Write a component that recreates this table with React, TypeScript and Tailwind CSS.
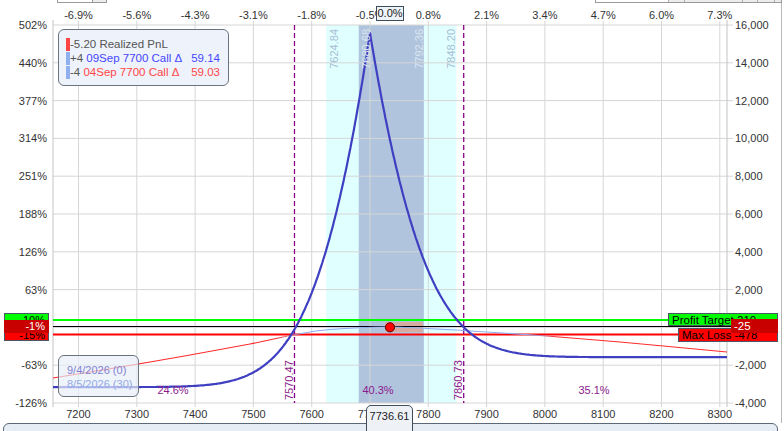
import React from 'react'

// price -> x on the plot
const px = (p: number) => 78.5 + (p - 7200) * 0.583
// dollars -> y on the plot
const vy = (v: number) => 327.4 - v * 0.0189

const TOP_PCT = ['-6.9%', '-5.6%', '-4.3%', '-3.1%', '-1.8%', '-0.5%', '0.8%', '2.1%', '3.4%', '4.7%', '6.0%', '7.3%']
const LEFT_TICKS = ['502%', '440%', '377%', '314%', '251%', '188%', '126%', '63%', '', '-63%', '-126%']
const RIGHT_TICKS = ['16,000', '14,000', '12,000', '10,000', '8,000', '6,000', '4,000', '2,000', '', '-2,000', '-4,000']
const PRICES = [7200, 7300, 7400, 7500, 7600, 7700, 7800, 7900, 8000, 8100, 8200, 8300]

function erfc(x: number) {
  const t = 1 / (1 + 0.5 * Math.abs(x))
  const r =
    t *
    Math.exp(
      -x * x - 1.26551223 +
        t * (1.00002368 + t * (0.37409196 + t * (0.09678418 + t * (-0.18628806 + t * (0.27886807 + t * (-1.13520398 + t * (1.48851587 + t * (-0.82215223 + t * 0.17087277))))))))
    )
  return x >= 0 ? r : 2 - r
}
const phi = (z: number) => Math.exp((-z * z) / 2) / Math.sqrt(2 * Math.PI)
const timeValue = (z: number) => (phi(z) - z * 0.5 * erfc(z / Math.SQRT2)) / phi(0)

function expiryPath() {
  const ps: number[] = []
  for (let p = 7156.3; p <= 8312.3; p += 2) ps.push(p)
  ps.push(7700)
  ps.sort((a, b) => a - b)
  return ps
    .map((p, i) => {
      const base = p < 7700 ? -3160 : -1575
      const v = base + (15577 - base) * timeValue(Math.abs(p - 7700) / 115)
      return `${i ? 'L' : 'M'}${px(p).toFixed(1)} ${vy(v).toFixed(1)}`
    })
    .join(' ')
}

function smoothPath(pts: number[][]) {
  let d = `M${pts[0][0]} ${pts[0][1]}`
  for (let i = 0; i < pts.length - 1; i++) {
    const p0 = pts[Math.max(0, i - 1)]
    const p1 = pts[i]
    const p2 = pts[i + 1]
    const p3 = pts[Math.min(pts.length - 1, i + 2)]
    const c1 = [p1[0] + (p2[0] - p0[0]) / 6, p1[1] + (p2[1] - p0[1]) / 6]
    const c2 = [p2[0] - (p3[0] - p1[0]) / 6, p2[1] - (p3[1] - p1[1]) / 6]
    d += ` C${c1[0].toFixed(1)} ${c1[1].toFixed(1)} ${c2[0].toFixed(1)} ${c2[1].toFixed(1)} ${p2[0]} ${p2[1]}`
  }
  return d
}

const T0 = [
  [53, 378], [150, 362], [250, 344], [293, 335], [330, 329.5], [390, 327],
  [463, 330.5], [540, 335.5], [620, 342], [727, 352],
]

function Chart() {
  const rows = LEFT_TICKS.map((_, i) => 25 + i * 37.8)
  return (
    <svg width={784} height={423} className="block" fontSize={11}>
      <defs>
        <linearGradient id="t0" gradientUnits="userSpaceOnUse" x1={53} y1={0} x2={727} y2={0}>
          <stop offset="0.33" stopColor="#ff2a2a" />
          <stop offset="0.37" stopColor="#8eacf2" />
          <stop offset="0.71" stopColor="#8eacf2" />
          <stop offset="0.75" stopColor="#ff2a2a" />
        </linearGradient>
      </defs>

      {/* ranges */}
      <rect x={px(7624.84)} y={25} width={px(7848.2) - px(7624.84)} height={378} fill="#e0ffff" />
      <rect x={px(7680.68)} y={25} width={px(7792.36) - px(7680.68)} height={378} fill="#b0c4de" />

      {/* grid */}
      {rows.map((y) => (
        <line key={y} x1={53} x2={733} y1={y} y2={y} stroke="#d6d6d6" />
      ))}
      {PRICES.map((p) => (
        <line key={p} x1={px(p)} x2={px(p)} y1={21} y2={407} stroke="#d6d6d6" />
      ))}
      <line x1={53} x2={53} y1={20} y2={407} stroke="#c4c4c4" />
      <line x1={727} x2={727} y1={20} y2={407} stroke="#c4c4c4" />
      <line x1={781.5} x2={781.5} y1={0} y2={423} stroke="#b8b8b8" />

      <rect x={385} y={322} width={38} height={10} fill="#d6aca2" />

      {/* target lines */}
      <line x1={53} x2={668} y1={320} y2={320} stroke="#00ff00" strokeWidth={2} />
      <line x1={53} x2={731} y1={326.5} y2={326.5} stroke="#000" strokeWidth={1} />
      <line x1={53} x2={678} y1={334.5} y2={334.5} stroke="#ff0000" strokeWidth={2} />

      {/* breakevens */}
      <line x1={px(7570.47)} x2={px(7570.47)} y1={25} y2={403} stroke="#8b008b" strokeWidth={1.3} strokeDasharray="5 3" />
      <line x1={px(7860.73)} x2={px(7860.73)} y1={25} y2={403} stroke="#8b008b" strokeWidth={1.3} strokeDasharray="5 3" />

      <path d={smoothPath(T0)} fill="none" stroke="url(#t0)" strokeWidth={1.1} />
      <path d={expiryPath()} fill="none" stroke="#3f3fc2" strokeWidth={2.2} strokeLinejoin="round" />

      <circle cx={390} cy={327.3} r={4.6} fill="#ff0000" stroke="#5a0000" strokeWidth={1} />

      {/* range labels */}
      <text transform="translate(338,29) rotate(-90)" textAnchor="end" fill="#a9bdd6">7624.84</text>
      <text transform="translate(370,29) rotate(-90)" textAnchor="end" fill="#dbe4ef">7680.68</text>
      <text transform="translate(423,29) rotate(-90)" textAnchor="end" fill="#dbe4ef">7792.36</text>
      <text transform="translate(455,29) rotate(-90)" textAnchor="end" fill="#a9bdd6">7848.20</text>

      <text transform="translate(293,400) rotate(-90)" fill="#8b1a8b">7570.47</text>
      <text transform="translate(462,400) rotate(-90)" fill="#8b1a8b">7860.73</text>
      <text x={173} y={390} textAnchor="middle" dominantBaseline="central" fill="#8b1a8b">24.6%</text>
      <text x={378} y={390} textAnchor="middle" dominantBaseline="central" fill="#8b1a8b">40.3%</text>
      <text x={594} y={390} textAnchor="middle" dominantBaseline="central" fill="#8b1a8b">35.1%</text>

      {/* axes text */}
      {TOP_PCT.map((t, i) => (
        <text key={t} x={px(PRICES[i])} y={14.5} textAnchor="middle" dominantBaseline="central" fill="#333">
          {t}
        </text>
      ))}
      {PRICES.map((p) => (
        <text key={p} x={px(p)} y={414} textAnchor="middle" dominantBaseline="central" fill="#333">
          {p}
        </text>
      ))}
      {LEFT_TICKS.map((t, i) =>
        t ? (
          <text key={t} x={47} y={rows[i]} textAnchor="end" dominantBaseline="central" fill="#333">
            {t}
          </text>
        ) : null
      )}
      {RIGHT_TICKS.map((t, i) =>
        t ? (
          <text key={t} x={735} y={rows[i]} dominantBaseline="central" fill="#333">
            {t}
          </text>
        ) : null
      )}
    </svg>
  )
}

export default function App() {
  return (
    <div className="relative h-[431px] w-[784px] overflow-hidden bg-white font-['Liberation_Sans',Arial,sans-serif] text-[11px]">
      <Chart />
      <div className="ml-[3px] h-[30px] w-[775px] rounded-t-[6px] border border-[#5b6878] bg-[#e7edf5]" />

      {/* toolbar edges peeking in at the top */}
      <div className="absolute left-[57px] top-[-20px] flex h-[23px] w-[50px] border border-[#9a9a9a] bg-white">
        <div className="flex-1" />
        <div className="w-[14px] border-l border-[#9a9a9a] bg-[#ececec]" />
      </div>
      <div className="absolute left-[595px] top-[-20px] flex h-[23px] w-[187px] border border-[#9a9a9a] bg-white">
        <div className="w-[72px]" />
        <div className="w-[16px] border-l border-[#b0b0b0] bg-[#ececec]" />
        <div className="w-[58px] border-l border-[#b0b0b0] bg-[#ececec]" />
        <div className="w-[15px] border-l border-[#b0b0b0] bg-[#ececec]" />
        <div className="w-[17px] border-l border-[#b0b0b0] bg-[#ececec]" />
        <div className="flex-1 border-l border-[#b0b0b0] bg-[#ececec]" />
      </div>

      {/* position legend */}
      <div className="absolute left-[58px] top-[29px] h-[57px] w-[171px] rounded-[6px] border border-[#6b7380] bg-[#eef2fa] pl-[7px] pr-[8px] pt-[7px] text-[11.5px] leading-[14px]">
        <div className="flex items-center">
          <span className="h-[13px] w-[4px] bg-[#ff4444]" />
          <span className="text-[#555]">-5.20 Realized PnL</span>
        </div>
        <div className="flex items-center">
          <span className="h-[13px] w-[4px] bg-[#8eb0ee]" />
          <span className="flex-1 text-[#555]">
            +4 <span className="text-[#4646ff]">09Sep 7700 Call Δ</span>
          </span>
          <span className="text-[#4646ff]">59.14</span>
        </div>
        <div className="flex items-center">
          <span className="h-[13px] w-[4px] bg-[#8eb0ee]" />
          <span className="flex-1 text-[#555]">
            -4 <span className="text-[#ff4646]">04Sep 7700 Call Δ</span>
          </span>
          <span className="text-[#ff4646]">59.03</span>
        </div>
      </div>

      {/* date legend */}
      <div className="absolute left-[58px] top-[355px] h-[42px] w-[81px] rounded-[6px] border border-[#6b7380] bg-[#e8eef8]/70 pl-[8px] pt-[7px] leading-[14px]">
        <div className="text-[#8282d2]">9/4/2026 (0)</div>
        <div className="text-[#92abe8]">8/5/2026 (30)</div>
      </div>

      {/* left value tags */}
      <div className="absolute left-[4px] top-[313px] h-[13px] w-[45px] border border-[#4a5666] bg-[#00ff00] pr-[3px] text-right leading-[12px] text-black">
        10%
      </div>
      <div className="absolute left-[4px] top-[328px] h-[13px] w-[45px] border border-[#4a5666] bg-[#ff0000] pr-[3px] text-right leading-[12px] text-black">
        -15%
      </div>
      <div className="absolute left-[4px] top-[320px] h-[13px] w-[45px] bg-[#c80000] pr-[4px] text-right leading-[13px] text-white">
        -1%
      </div>

      {/* right value tags */}
      <div className="absolute left-[668px] top-[313px] h-[13px] w-[110px] border border-[#4a5666] bg-[#00ff00] pl-[3px] text-[11.5px] leading-[12px] text-black">
        Profit Target 210
      </div>
      <div className="absolute left-[678px] top-[328px] h-[14px] w-[100px] border border-[#4a5666] bg-[#ff0000] pl-[3px] text-[11.5px] leading-[13px] text-black">
        Max Loss -478
      </div>
      <div className="absolute left-[731px] top-[319px] h-[14px] w-[47px] bg-[#c80000] pl-[3px] text-[11.5px] leading-[14px] text-white">
        -25
      </div>

      {/* current price markers */}
      <div className="absolute left-[376px] top-[6px] flex h-[15px] w-[28px] items-center justify-center border border-[#3d4b5a] bg-[#eef3f8] text-[#222]">
        0.0%
      </div>
      <div className="absolute left-[366px] top-[405px] flex h-[30px] w-[47px] justify-center rounded-t-[5px] border border-[#3f4d5c] bg-[#eef2f7] pt-[4px] leading-[13px] text-[#222]">
        7736.61
      </div>
    </div>
  )
}
